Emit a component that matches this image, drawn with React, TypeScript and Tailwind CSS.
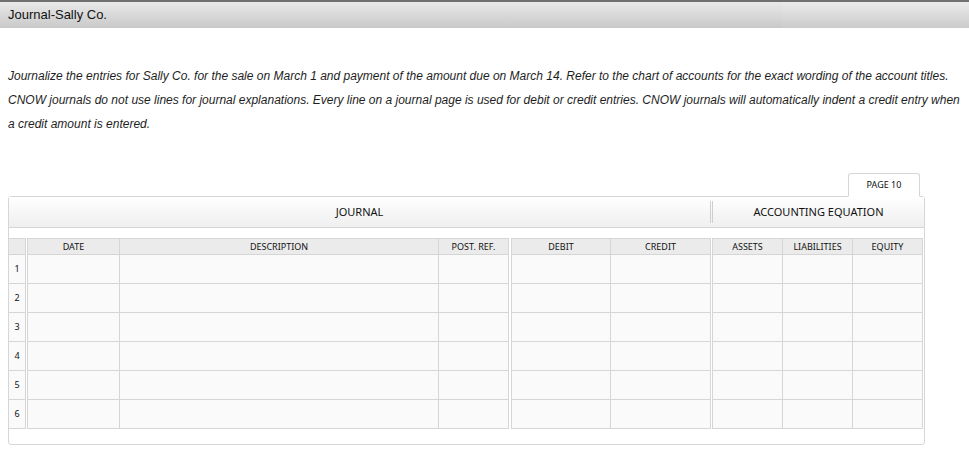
import React from 'react';

interface Column {
  id: string;
  label: string;
  width: string;
  first?: boolean;
}

type Cell = Column | { gap: string };

// journal grid: row number, journal group, amounts group, accounting equation group
const cells: Cell[] = [
  { id: 'num', label: '', width: 'w-[17px]' },
  { gap: 'w-px' },
  { id: 'date', label: 'DATE', width: 'w-[93px]', first: true },
  { id: 'desc', label: 'DESCRIPTION', width: 'w-[319px]' },
  { id: 'ref', label: 'POST. REF.', width: 'w-[70px]' },
  { gap: 'w-[2px]' },
  { id: 'debit', label: 'DEBIT', width: 'w-[100px]', first: true },
  { id: 'credit', label: 'CREDIT', width: 'w-[100px]' },
  { gap: 'w-px' },
  { id: 'assets', label: 'ASSETS', width: 'w-[71px]', first: true },
  { id: 'liab', label: 'LIABILITIES', width: 'w-[70px]' },
  { id: 'equity', label: 'EQUITY', width: 'w-[70px]' },
];

const rows = [1, 2, 3, 4, 5, 6];

const JournalRow = ({ header, n }: { header?: boolean; n?: number }) => (
  <div className={`flex ${header ? 'h-[17px]' : 'h-[29px]'}`}>
    {cells.map((c, i) => {
      if ('gap' in c) return <div key={i} className={`${c.gap} shrink-0`} />;
      return (
        <div
          key={c.id}
          className={`${c.width} shrink-0 flex items-center justify-center border-r border-b border-[#d6d6d6] ${
            c.first ? 'border-l' : ''
          } ${header ? 'border-t bg-[#ebebeb]' : 'bg-[#fafafa]'}`}
        >
          {header ? c.label : c.id === 'num' ? n : ''}
        </div>
      );
    })}
  </div>
);

export default function App() {
  return (
    <div className="w-[969px] h-[468px] bg-white overflow-hidden">
      {/* title bar */}
      <div className="flex h-[28px] border-t-2 border-[#707070]">
        <div className="w-[782px] bg-gradient-to-b from-[#e9e9e9] to-[#c9c9c9] pl-2 pt-[3px] text-[13px] text-[#111] font-['Liberation_Sans',Arial,sans-serif]">
          Journal-Sally Co.
        </div>
        <div className="flex-1 bg-gradient-to-b from-[#ebebeb] to-[#cbcbcb]" />
      </div>

      <p className="mt-[36px] pl-2 text-[12px] leading-[24px] italic text-[#1e1e1e] whitespace-nowrap font-['Liberation_Sans',Arial,sans-serif]">
        Journalize the entries for Sally Co. for the sale on March 1 and payment of the amount due on March 14. Refer to the chart of accounts for the exact wording of the account titles.
        <br />
        CNOW journals do not use lines for journal explanations. Every line on a journal page is used for debit or credit entries. CNOW journals will automatically indent a credit entry when
        <br />
        a credit amount is entered.
      </p>

      <div className="ml-2 mt-[37px] w-[917px] font-['Noto_Sans',Tahoma,sans-serif] text-[#111]">
        {/* page tab */}
        <div className="flex justify-end pr-[5px]">
          <div className="relative z-10 -mb-px w-[72px] h-[24px] flex items-center justify-center bg-white border border-b-white border-[#d6d6d6] rounded-t-[3px] text-[9px]">
            PAGE 10
          </div>
        </div>

        <div className="border border-[#d6d6d6] rounded-[3px] bg-white">
          {/* section headings */}
          <div className="flex h-[31px] border-b border-[#d6d6d6] bg-gradient-to-b from-white to-[#efefef] text-[11px]">
            <div className="w-[701px] flex items-center justify-center">JOURNAL</div>
            <div className="w-px my-[4px] bg-[#cfcfcf]" />
            <div className="w-px" />
            <div className="w-px my-[4px] bg-[#cfcfcf]" />
            <div className="flex-1 flex items-center justify-center">ACCOUNTING EQUATION</div>
          </div>

          <div className="pt-[10px] pb-[15px] text-[9px]">
            <JournalRow header />
            {rows.map((n) => (
              <JournalRow key={n} n={n} />
            ))}
          </div>
        </div>
      </div>
    </div>
  );
}
